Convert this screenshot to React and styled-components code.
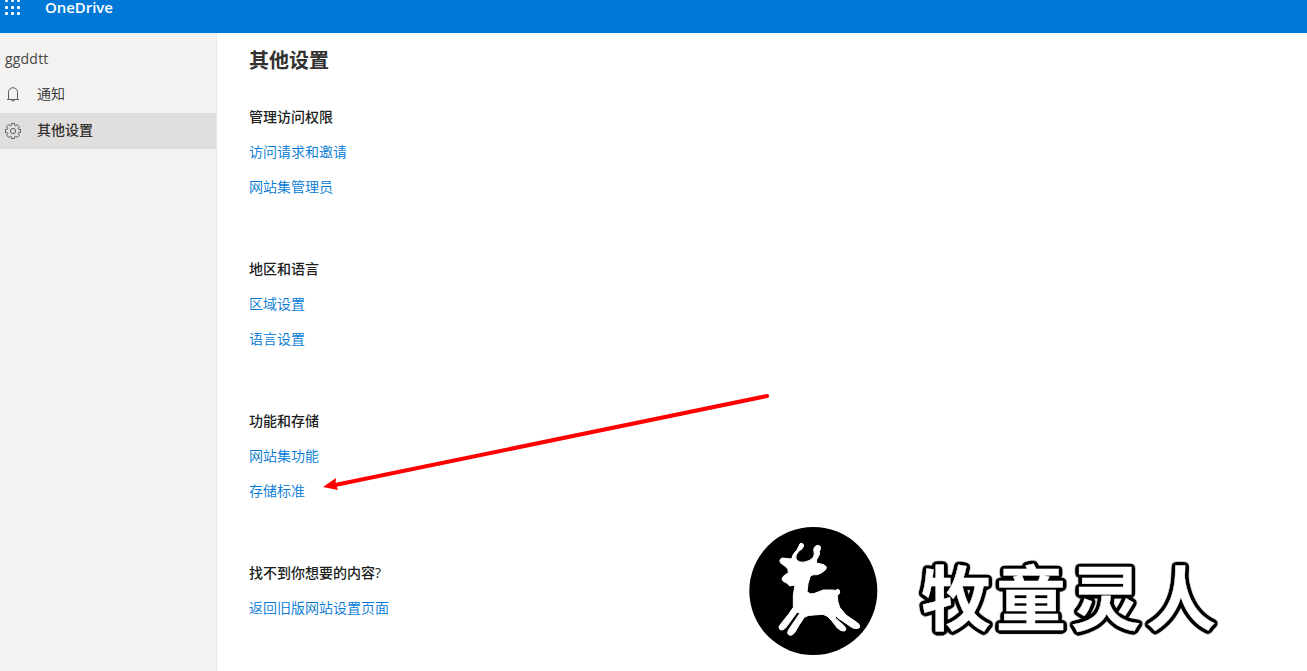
import React from 'react';
import styled, { createGlobalStyle } from 'styled-components';

const GlobalStyle = createGlobalStyle`
  * { box-sizing: border-box; }
  body {
    margin: 0;
    overflow: hidden;
    background: #fff;
    color: #323130;
    font-family: "Open Sans", "Noto Sans CJK SC", sans-serif;
    font-size: 14px;
  }
`;

const Page = styled.div`
  position: relative;
  display: flex;
  flex-direction: column;
  height: 671px;
  overflow: hidden;
`;

const Header = styled.header`
  display: flex;
  align-items: flex-start;
  height: 33px;
  flex: none;
  background: #0078d7;
  color: #fff;
`;

const Waffle = styled.svg`
  width: 24px;
  height: 20px;
  margin-right: 21px;
  fill: #fff;
`;

const Brand = styled.span`
  font-size: 15px;
  font-weight: 600;
  line-height: 14px;
  letter-spacing: -0.05px;
`;

const Body = styled.div`
  display: flex;
  flex: 1;
`;

const Sidebar = styled.aside`
  width: 217px;
  flex: none;
  padding-top: 8px;
  background: #f3f2f1;
  border-right: 1px solid #eae9e8;
`;

const SiteName = styled.div`
  height: 36px;
  padding-left: 5px;
  line-height: 35px;
  font-size: 14px;
  font-weight: 500;
  letter-spacing: 0.2px;
  color: #484644;
`;

const NavItem = styled.div`
  display: flex;
  align-items: center;
  height: 36px;
  padding: 0 0 4px 4px;
  font-weight: ${(p) => (p.$active ? 500 : 350)};
  background: ${(p) => (p.$active ? '#e1dfdd' : 'transparent')};
`;

const NavIcon = styled.svg`
  width: 18px;
  height: 18px;
  margin: 3px 15px 0 0;
  fill: none;
  stroke: #605e5c;
  stroke-width: 1;
`;

const Main = styled.main`
  flex: 1;
  padding: 13px 0 0 32px;
`;

const Title = styled.h1`
  margin: 0 0 23px;
  font-size: 20px;
  line-height: 30px;
  font-weight: 700;
`;

const Section = styled.section`
  height: 152px;
`;

const SectionTitle = styled.h2`
  margin: 0;
  font-size: 14px;
  line-height: 35px;
  font-weight: 500;
  color: #201f1e;
`;

const SettingLink = styled.a`
  display: block;
  width: max-content;
  line-height: 35px;
  font-weight: 350;
  color: #0078d4;
`;

const Arrow = styled.svg`
  position: absolute;
  left: 318px;
  top: 388px;
  width: 456px;
  height: 108px;
`;

const Watermark = styled.div`
  position: absolute;
  left: 748px;
  top: 526px;
  display: flex;
  align-items: center;
  height: 130px;
`;

const Badge = styled.svg`
  width: 130px;
  height: 130px;
  margin-right: 43px;
  filter: blur(0.5px);
`;

const outline = Array.from({ length: 24 }, (_, i) => {
  const a = (i * Math.PI) / 12;
  return `${(Math.cos(a) * 3.5).toFixed(2)}px ${(Math.sin(a) * 3.5).toFixed(2)}px 1px #000`;
}).join(', ');

const WatermarkText = styled.span`
  font-family: "Noto Sans CJK SC", sans-serif;
  font-size: 70px;
  line-height: 100px;
  font-weight: 700;
  letter-spacing: 5px;
  color: #fff;
  -webkit-text-stroke: 0.4px #fff;
  text-shadow: ${outline};
  position: relative;
  top: 4px;
`;

const sections = [
  { title: '管理访问权限', links: ['访问请求和邀请', '网站集管理员'] },
  { title: '地区和语言', links: ['区域设置', '语言设置'] },
  { title: '功能和存储', links: ['网站集功能', '存储标准'] },
  { title: '找不到你想要的内容?', links: ['返回旧版网站设置页面'] },
];

const gearPath = Array.from({ length: 8 }, (_, i) => {
  const base = (i * Math.PI) / 4;
  return [[-0.3, 5.9], [-0.2, 7.7], [0.2, 7.7], [0.3, 5.9]]
    .map(([d, r]) => `${(9 + Math.cos(base + d) * r).toFixed(2)} ${(9 + Math.sin(base + d) * r).toFixed(2)}`)
    .join('L');
}).join('L');

export default function App() {
  return (
    <Page>
      <GlobalStyle />
      <Header>
        <Waffle viewBox="0 0 24 20">
          {[0, 6, 12].map((y) =>
            [5, 11, 17].map((x) => <rect key={`${x}-${y}`} x={x} y={y} width="3" height={y ? 3 : 2} rx="1" />)
          )}
        </Waffle>
        <Brand>OneDrive</Brand>
      </Header>
      <Body>
        <Sidebar>
          <SiteName>ggddtt</SiteName>
          <NavItem>
            <NavIcon viewBox="0 0 18 18">
              <path d="M3 13.5h12M4.5 13.5V6.2a4.5 4.5 0 0 1 9 0v7.3M7.2 13.7a1.9 1.9 0 0 0 3.6 0" />
            </NavIcon>
            通知
          </NavItem>
          <NavItem $active>
            <NavIcon viewBox="0 0 18 18">
              <path d={`M${gearPath}Z`} strokeLinejoin="round" />
              <circle cx="9" cy="9" r="2.6" />
            </NavIcon>
            其他设置
          </NavItem>
        </Sidebar>
        <Main>
          <Title>其他设置</Title>
          {sections.map((s) => (
            <Section key={s.title}>
              <SectionTitle>{s.title}</SectionTitle>
              {s.links.map((l) => (
                <SettingLink key={l}>{l}</SettingLink>
              ))}
            </Section>
          ))}
        </Main>
      </Body>
      <Arrow viewBox="318 388 456 108">
        <path d="M767 396L335 485" stroke="#f00" strokeWidth="4" strokeLinecap="round" />
        <path d="M323 487L336 478L335.5 484L338 490Z" fill="#f00" />
      </Arrow>
      <Watermark>
        <Badge viewBox="24 33 390 390">
          <circle cx="220" cy="228" r="192" />
          <path
            fill="#fff"
            stroke="#fff"
            strokeWidth="3"
            strokeLinejoin="round"
            d="M180 86Q190 82 191 93Q188 103 177 108Q164 121 168 132Q177 144 194 141Q211 138 220 127Q225 119 221 103Q224 91 235 91Q244 93 241 103Q237 108 238 119L230 134L229 144L252 149Q263 155 257 164Q246 174 232 179Q217 178 211 183L204 206L201 231Q212 240 224 235L250 225H278Q288 228 293 223Q301 224 299 234L292 242Q292 261 299 277L318 300L350 322Q363 330 358 338Q349 344 337 338L294 309L288 303L286 309L313 333Q322 342 314 348Q303 350 292 339L274 316Q264 302 249 298L221 300Q203 300 193 307L178 329L164 353Q156 364 147 360Q139 355 146 344L180 294L171 292L139 336Q129 349 119 343Q113 336 123 326L147 296L160 277L160 240L165 210L149 213Q141 202 130 199Q122 193 130 184L145 173Q146 161 137 155L121 143Q116 133 126 129L155 132Q157 117 171 105Z"
          />
        </Badge>
        <WatermarkText>牧童灵人</WatermarkText>
      </Watermark>
    </Page>
  );
}
